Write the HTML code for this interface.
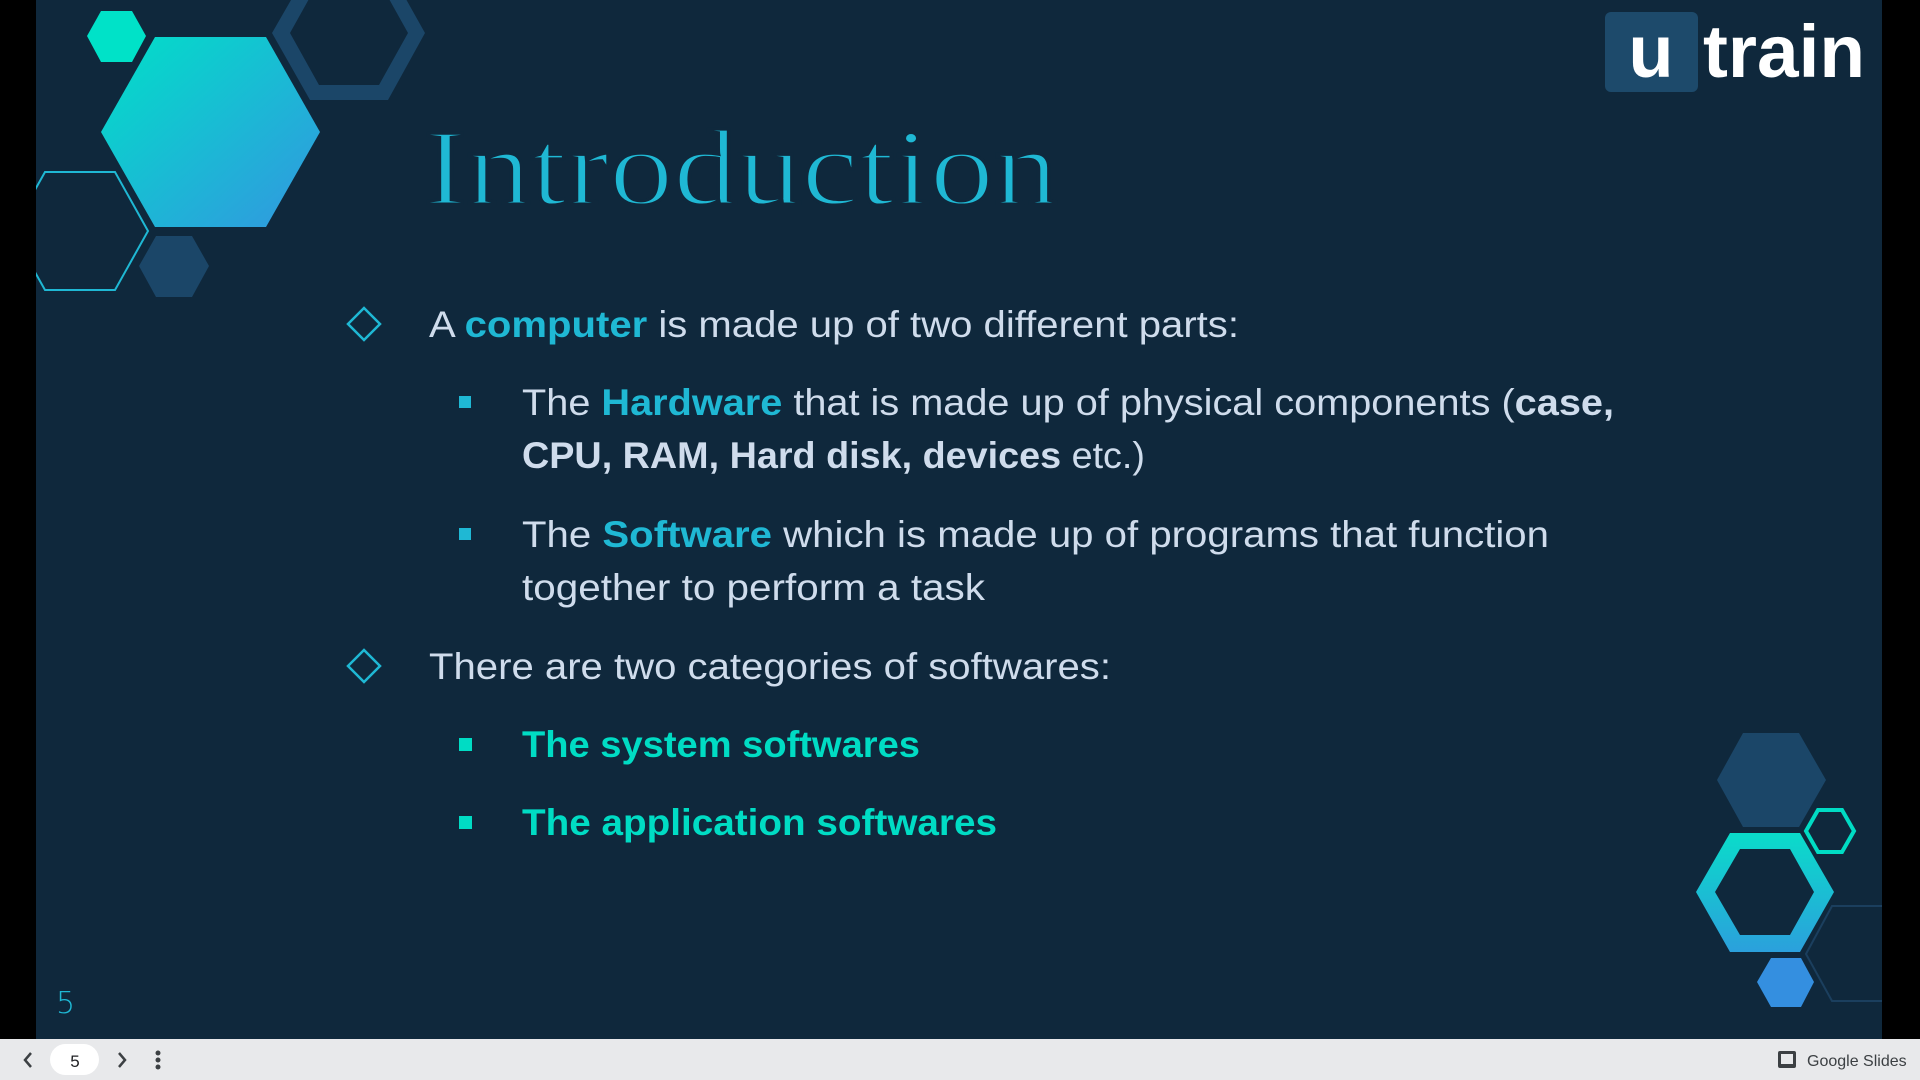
<!DOCTYPE html>
<html><head><meta charset="utf-8"><style>
html,body{margin:0;padding:0;width:1920px;height:1080px;overflow:hidden;background:#000}
svg{display:block}
</style></head><body>
<svg width="1920" height="1080" viewBox="0 0 1920 1080" xmlns="http://www.w3.org/2000/svg">
<defs>
<linearGradient id="g1" x1="0" y1="0" x2="1" y2="1">
<stop offset="0" stop-color="#00e0c8"/><stop offset="1" stop-color="#3396e0"/></linearGradient>
<linearGradient id="g2" x1="0" y1="0" x2="0" y2="1">
<stop offset="0" stop-color="#0adcca"/><stop offset="1" stop-color="#2ba0dc"/></linearGradient>
<clipPath id="slide"><rect x="36" y="0" width="1846" height="1039"/></clipPath>
</defs>
<rect x="0" y="0" width="1920" height="1080" fill="#000"/>
<rect x="36" y="0" width="1846" height="1039" fill="#0f283c"/>
<g clip-path="url(#slide)">
<polygon points="87,36 101,11 132,11 146,36 132,62 101,62" fill="#00e2c8"/>
<polygon points="101,132 155,37 266,37 320,132 266,227 155,227" fill="url(#g1)"/>
<path d="M272,33 L310,-33 L388,-33 L425,33 L388,100 L310,100 Z M290,33 L319,85 L379,85 L408,33 L379,-19 L319,-19 Z" fill="#1b4668" fill-rule="evenodd"/>
<polygon points="12,231 45,172 115,172 148,231 115,290 45,290" fill="none" stroke="#1fb8d4" stroke-width="2"/>
<polygon points="139,266 156,236 192,236 209,266 192,297 156,297" fill="#1b4668"/>
<polygon points="1717,780 1743,733 1799,733 1826,780 1799,827 1743,827" fill="#1b4668"/>
<polygon points="1806,954 1832,906 1900,906 1920,954 1900,1001 1832,1001" fill="none" stroke="#1b3f5e" stroke-width="2"/>
<path d="M1696,892 L1730,833 L1800,833 L1834,892 L1800,952 L1730,952 Z M1715,892 L1740,935 L1790,935 L1814,892 L1790,849 L1740,849 Z" fill="url(#g2)" fill-rule="evenodd"/>
<polygon points="1806,831 1818,810 1842,810 1854,831 1842,852 1818,852" fill="none" stroke="#00dcc4" stroke-width="4"/>
<polygon points="1757,982 1771,958 1801,958 1814,982 1801,1007 1771,1007" fill="#348fe0"/>
</g>
<rect x="1605" y="12" width="93" height="80" rx="6" fill="#1d4a6b"/>
<text x="1651" y="77" text-anchor="middle" font-family="Liberation Sans, sans-serif" font-weight="bold" font-size="74" fill="#fff">u</text>
<text x="1703" y="77" textLength="162" lengthAdjust="spacingAndGlyphs" font-family="Liberation Sans, sans-serif" font-weight="bold" font-size="74" fill="#fff">train</text>
<text x="424" y="204" textLength="634" lengthAdjust="spacingAndGlyphs" font-family="Liberation Serif, serif" font-size="108" fill="#1fb8d4" stroke="#0f283c" stroke-width="3" paint-order="stroke fill" style="paint-order:normal">Introduction</text>
<g font-family="Liberation Sans, sans-serif" font-size="37" fill="#cfdcec">
<polygon points="364,308 380,324 364,340 348,324" fill="none" stroke="#1fb8d4" stroke-width="2.5"/>
<text x="429" y="337" textLength="810" lengthAdjust="spacingAndGlyphs">A <tspan fill="#1fb8d4" font-weight="bold">computer</tspan> is made up of two different parts:</text>
<rect x="459" y="396" width="12" height="12" fill="#1fb8d4"/>
<text x="522" y="415" textLength="1092" lengthAdjust="spacingAndGlyphs">The <tspan fill="#1fb8d4" font-weight="bold">Hardware</tspan> that is made up of physical components (<tspan font-weight="bold">case,</tspan></text>
<text x="522" y="468" textLength="623" lengthAdjust="spacingAndGlyphs"><tspan font-weight="bold">CPU, RAM, Hard disk, devices</tspan> etc.)</text>
<rect x="459" y="528" width="12" height="12" fill="#1fb8d4"/>
<text x="522" y="547" textLength="1027" lengthAdjust="spacingAndGlyphs">The <tspan fill="#1fb8d4" font-weight="bold">Software</tspan> which is made up of programs that function</text>
<text x="522" y="600" textLength="463" lengthAdjust="spacingAndGlyphs">together to perform a task</text>
<polygon points="364,650 380,666 364,682 348,666" fill="none" stroke="#1fb8d4" stroke-width="2.5"/>
<text x="429" y="679" textLength="682" lengthAdjust="spacingAndGlyphs">There are two categories of softwares:</text>
<rect x="459" y="738" width="13" height="13" fill="#00dcc4"/>
<text x="522" y="757" textLength="398" lengthAdjust="spacingAndGlyphs" fill="#00dcc4" font-weight="bold">The system softwares</text>
<rect x="459" y="816" width="13" height="13" fill="#00dcc4"/>
<text x="522" y="835" textLength="475" lengthAdjust="spacingAndGlyphs" fill="#00dcc4" font-weight="bold">The application softwares</text>
</g>
<text x="56" y="1013" font-family="DejaVu Sans, sans-serif" font-weight="200" font-size="30" fill="#1fb8d4">5</text>
<rect x="0" y="1039" width="1920" height="41" fill="#e8e9eb"/>
<polyline points="31,1053 25,1060 31,1067" fill="none" stroke="#3c4043" stroke-width="2.5"/>
<rect x="50" y="1044" width="49" height="31" rx="15.5" fill="#fff"/>
<text x="75" y="1067" text-anchor="middle" font-family="Liberation Sans, sans-serif" font-size="17" fill="#202124">5</text>
<polyline points="119,1053 125,1060 119,1067" fill="none" stroke="#3c4043" stroke-width="2.5"/>
<circle cx="158" cy="1053" r="2.5" fill="#3c4043"/><circle cx="158" cy="1060" r="2.5" fill="#3c4043"/><circle cx="158" cy="1067" r="2.5" fill="#3c4043"/>
<rect x="1778" y="1051" width="18" height="17" rx="2" fill="#3c4043"/>
<rect x="1781" y="1054" width="12" height="10" fill="#e8e9eb"/>
<text x="1807" y="1066" font-family="Liberation Sans, sans-serif" font-size="16" fill="#3c4043">Google Slides</text>
</svg>
</body></html>
